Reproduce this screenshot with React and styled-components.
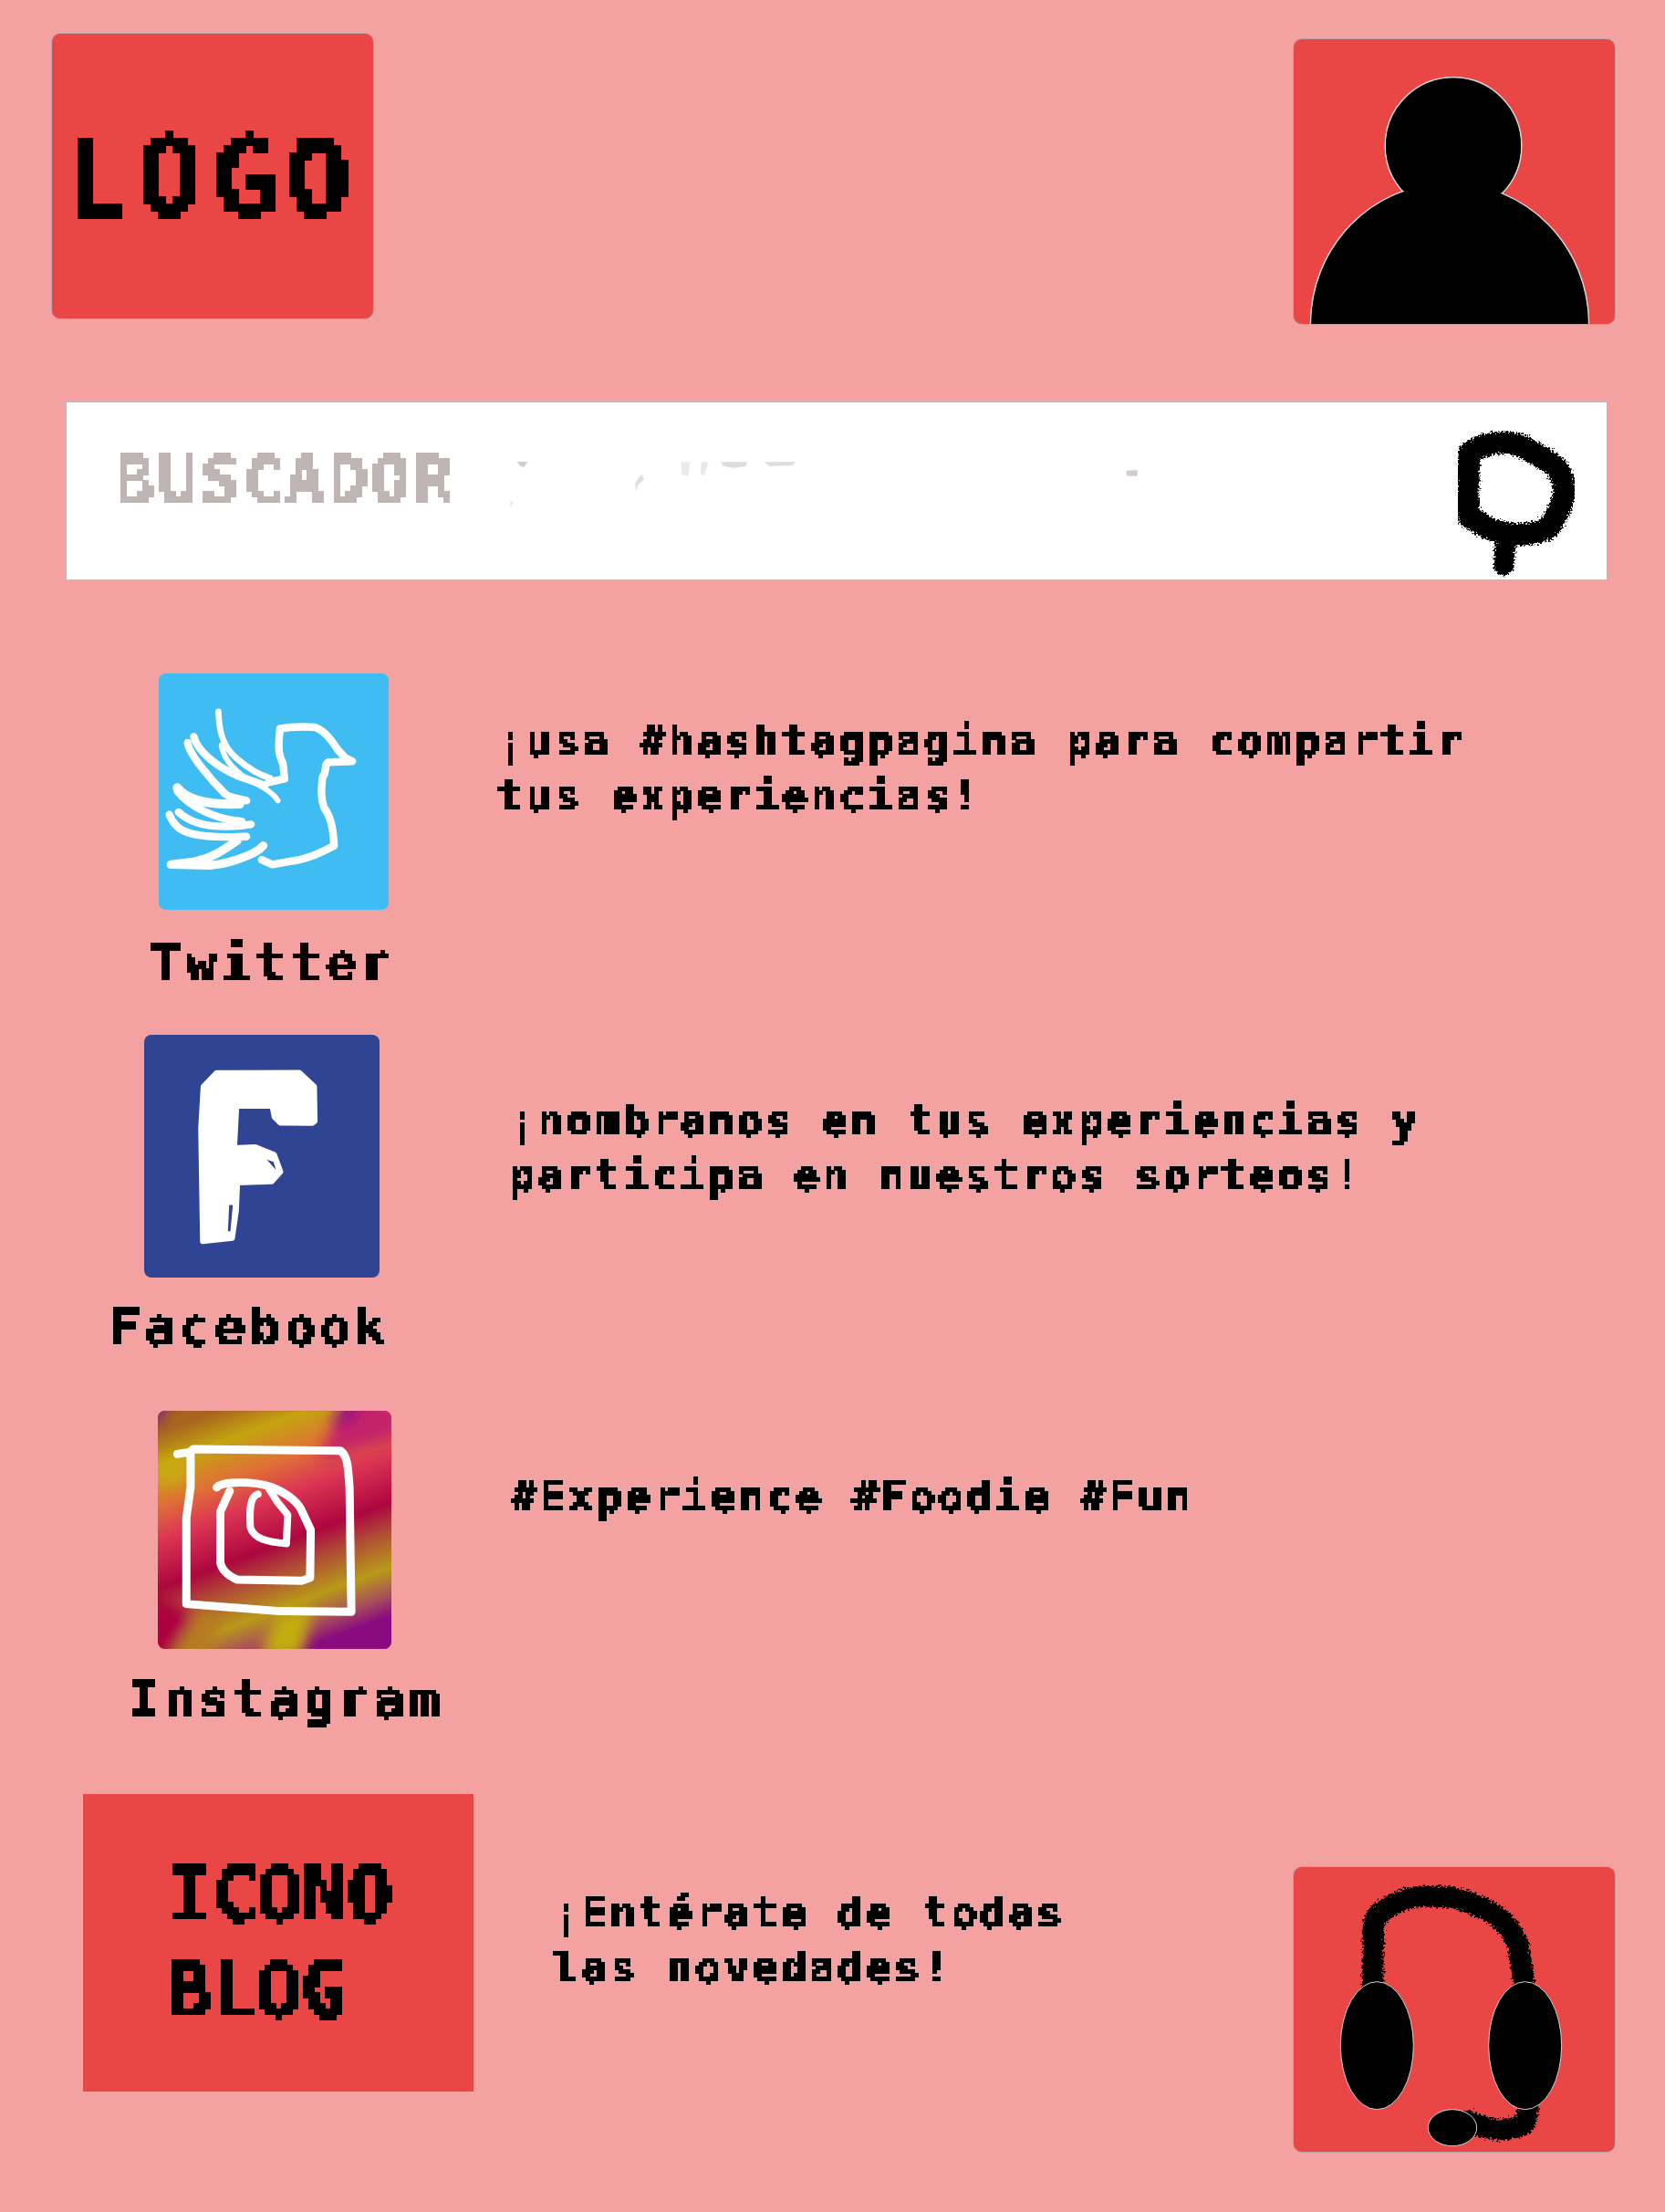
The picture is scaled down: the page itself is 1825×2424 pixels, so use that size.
import React from 'react';
import styled, { createGlobalStyle } from 'styled-components';

const GlobalStyle = createGlobalStyle`
  html, body {
    margin: 0;
    padding: 0;
    background: #f3a1a1;
  }
`;

const MONO = `"DejaVu Sans Mono", "Liberation Mono", monospace`;

const Page = styled.div`
  width: 1825px;
  height: 2424px;
  overflow: hidden;
  background: #f3a1a1;
  font-family: ${MONO};
  font-weight: 700;
  color: #000;
  padding-top: 36px;
  box-sizing: border-box;
`;

const HiddenDefs = styled.svg`
  position: absolute;
  width: 0;
  height: 0;
`;

const Header = styled.header`
  display: flex;
  justify-content: space-between;
  align-items: flex-start;
  padding: 0 54px 0 56px;
`;

const RedTile = styled.div`
  width: 354px;
  height: 314px;
  margin-top: ${({ $top }) => $top || 0}px;
  box-sizing: border-box;
  background: #ea4646;
  border: 1px solid #b9a6a6;
  border-radius: 10px;
  overflow: hidden;
  display: flex;
  align-items: center;
  justify-content: center;
`;

const LogoText = styled.div`
  font-size: 120px;
  letter-spacing: 9px;
  line-height: 1;
  margin-top: 3px;
  margin-left: -3px;
  filter: url(#pxLarge);
`;

const TileArt = styled.svg`
  display: block;
  width: 100%;
  height: 100%;
`;

const SearchBar = styled.div`
  margin: 84px 0 0 72px;
  width: 1690px;
  height: 196px;
  box-sizing: border-box;
  background: #fff;
  border: 1px solid #b9b9b9;
  display: flex;
  align-items: center;
  padding-left: 53px;
`;

const SearchHint = styled.span`
  font-size: 72px;
  letter-spacing: 3.4px;
  line-height: 1;
  color: #bfb5b5;
  margin-top: -24px;
  filter: url(#pxMedium);
`;

const Smudges = styled.svg`
  width: 760px;
  height: 90px;
  margin: -25px 0 0 33px;
  flex: none;
`;

const SearchIcon = styled.svg`
  width: 140px;
  height: 167px;
  margin-left: auto;
  margin-right: 28px;
  margin-top: 28px;
  flex: none;
`;

const SocialList = styled.section`
  margin-top: 102px;
  display: flex;
  flex-direction: column;
`;

const SocialRow = styled.div`
  display: flex;
  align-items: flex-start;
  height: ${({ $height }) => $height}px;
`;

const SocialCard = styled.div`
  width: 540px;
  flex: none;
`;

const SocialIcon = styled.div`
  width: ${({ $w }) => $w}px;
  height: ${({ $h }) => $h}px;
  margin-left: ${({ $left }) => $left}px;
  border-radius: 8px;
  overflow: hidden;
  background: ${({ $bg }) => $bg};
`;

const SocialName = styled.div`
  font-size: 56px;
  letter-spacing: 4.7px;
  line-height: 60px;
  margin-left: ${({ $left }) => $left}px;
  margin-top: ${({ $top }) => $top}px;
  white-space: nowrap;
  filter: url(#pxSmall);
`;

const Copy = styled.p`
  margin: ${({ $top }) => $top}px 0 0 ${({ $left }) => $left}px;
  font-size: 47px;
  letter-spacing: 2.9px;
  line-height: 60px;
  white-space: pre-line;
  filter: url(#pxSmall);
`;

const BlogRow = styled.footer`
  padding-left: 91px;
  display: flex;
  align-items: flex-start;
`;

const BlogTile = styled.div`
  width: 428px;
  height: 326px;
  flex: none;
  background: #ea4646;
  box-sizing: border-box;
  padding: 58px 0 0 91px;
  font-size: 84px;
  line-height: 105px;
  letter-spacing: -1.3px;
`;

const BlogWord = styled.span`
  display: block;
  margin-left: ${({ $left }) => $left || 0}px;
  filter: url(#pxMedium);
`;

const HeadsetTile = styled(RedTile)`
  margin-left: auto;
  margin-right: 54px;
`;

// text stays real text, this only snaps it to a coarse grid like the bitmap font in the mockup
function PixelFilter({ id, size }) {
  const half = Math.floor(size / 2);
  return (
    <filter id={id}>
      <feFlood x={half} y={half} width="1" height="1" />
      <feComposite width={size} height={size} />
      <feTile result="grid" />
      <feComposite in="SourceGraphic" in2="grid" operator="in" />
      <feComponentTransfer>
        <feFuncA type="discrete" tableValues="0 1 1" />
      </feComponentTransfer>
      <feMorphology operator="dilate" radius={half} />
    </filter>
  );
}

function Avatar() {
  return (
    <TileArt viewBox="0 0 352 313" aria-hidden="true">
      <g fill="#000" stroke="#d8d8d8" strokeWidth="1.5">
        <circle cx="175" cy="117" r="75" />
        <ellipse cx="171" cy="313" rx="153" ry="155" />
      </g>
      <g fill="#000">
        <circle cx="175" cy="117" r="74" />
        <ellipse cx="171" cy="313" rx="152" ry="154" />
      </g>
    </TileArt>
  );
}

function SearchGlyph() {
  return (
    <SearchIcon viewBox="100 55 420 500" aria-hidden="true">
      <defs>
        <filter id="roughSearch" x="-10%" y="-10%" width="120%" height="120%">
          <feTurbulence type="fractalNoise" baseFrequency="0.16" numOctaves="3" seed="4" />
          <feDisplacementMap in="SourceGraphic" scale="30" xChannelSelector="R" yChannelSelector="G" />
        </filter>
      </defs>
      <g filter="url(#roughSearch)" fill="none" stroke="#050505" strokeLinejoin="round" strokeLinecap="round">
        <path strokeWidth="74" d="M150 140 C190 110 230 103 265 103 C300 103 325 112 345 125 C375 140 400 155 425 172 C450 195 465 225 465 260 C465 295 445 335 415 380 C385 400 345 405 305 405 C270 400 240 395 215 385 C190 370 165 355 150 345 C148 280 148 210 150 140 Z" />
        <path strokeWidth="68" d="M272 405 L266 505" />
      </g>
    </SearchIcon>
  );
}

function SearchSmudges() {
  return (
    <Smudges viewBox="0 0 1568 186" aria-hidden="true">
      <g fill="#c9bfc0" opacity="0.8">
        <path d="M68 52 L92 52 L84 64 L76 62 Z" />
        <path d="M350 80 L356 92 L342 104 L338 120 L336 100 Z" opacity="0.7" />
        <path d="M84 198 L94 198 L94 208 L84 208 Z" />
        <path d="M530 52 L590 52 L586 62 L560 66 L536 62 Z" opacity="0.7" />
        <path d="M628 52 L700 52 L692 60 L640 62 Z" opacity="0.7" />
        <path d="M1448 72 L1474 70 L1474 84 L1450 84 Z" />
        <path d="M1436 204 L1474 186 L1474 208 L1450 208 Z" />
      </g>
      <g fill="#ece8e8">
        <path d="M440 52 L460 52 L456 84 L442 80 Z" />
        <path d="M486 52 L502 52 L492 84 L484 78 Z" />
        <path d="M480 195 L780 195 L780 208 L480 208 Z" opacity="0.6" />
        <path d="M1310 198 L1436 198 L1436 208 L1310 208 Z" opacity="0.6" />
        <path d="M52 140 L60 142 L54 156 Z" />
      </g>
    </Smudges>
  );
}

function TwitterArt() {
  return (
    <TileArt viewBox="72 55 755 775" aria-hidden="true">
      <g fill="none" stroke="#fff" strokeWidth="25" strokeLinecap="round" strokeLinejoin="round">
        <path d="M470 236 C510 228 550 229 585 231 C620 245 640 275 660 305 L685 332 L708 343 L630 346 C612 352 628 372 610 395 C605 430 605 470 615 495 C640 530 645 570 648 620 C600 645 560 665 500 672 L445 682 L410 666" />
        <path d="M470 236 C465 290 463 320 480 350 L485 400 L432 412" />
        <path d="M268 180 C270 230 275 290 330 335 C370 370 410 390 438 398" strokeWidth="20" />
        <path d="M278 290 C285 340 330 385 380 410 C420 430 450 448 463 472" strokeWidth="18" />
        <path d="M187 262 C200 310 260 360 330 390 L420 422" />
        <path d="M167 282 C172 320 240 400 290 450 C310 465 335 465 360 472" />
        <path d="M133 430 C160 465 220 487 338 483" strokeWidth="30" />
        <path d="M133 440 C170 490 260 535 345 540" />
        <path d="M137 510 C180 550 260 567 375 550" />
        <path d="M107 518 C130 575 170 597 360 590" />
        <path d="M330 603 C290 630 250 660 190 672 L112 682 L240 685 C300 680 390 650 415 620" strokeWidth="28" />
      </g>
    </TileArt>
  );
}

function FacebookArt() {
  return (
    <TileArt viewBox="144 42 775 798" aria-hidden="true">
      <path fill="#fff" stroke="#fff" strokeWidth="18" strokeLinejoin="round" d="M382 167 L655 166 L704 212 L706 326 L698 332 L592 331 L573 312 L566 276 L448 276 L441 414 L510 411 L572 436 L593 492 L564 524 L451 528 L447 620 L434 711 L337 721 L331 350 L339 212 Z" />
      <path fill="#304494" d="M424 602 L436 602 L428 688 L420 688 Z" />
      <path fill="#304494" d="M548 452 L570 460 L578 486 L562 468 Z" />
    </TileArt>
  );
}

function InstagramArt() {
  return (
    <TileArt viewBox="128 48 770 784" aria-hidden="true">
      <defs>
        <linearGradient id="instaBands" gradientUnits="userSpaceOnUse" x1="320" y1="50" x2="610" y2="830">
          <stop offset="0" stopColor="#a8651f" />
          <stop offset="0.12" stopColor="#c4a40f" />
          <stop offset="0.27" stopColor="#df7036" />
          <stop offset="0.4" stopColor="#dc3554" />
          <stop offset="0.58" stopColor="#ad0640" />
          <stop offset="0.68" stopColor="#b04a36" />
          <stop offset="0.82" stopColor="#b89a18" />
          <stop offset="0.92" stopColor="#a84f5a" />
          <stop offset="1" stopColor="#8a0a80" />
        </linearGradient>
        <filter id="instaBlur" x="-30%" y="-30%" width="160%" height="160%">
          <feGaussianBlur stdDeviation="22" />
        </filter>
      </defs>
      <rect x="128" y="48" width="770" height="784" fill="url(#instaBands)" />
      <g filter="url(#instaBlur)">
        <path d="M740 10 L930 10 L930 130 L660 210 Z" fill="#c4206a" />
        <path d="M740 20 L800 20 L760 90 L700 90 Z" fill="#8b0f80" />
        <path d="M90 640 L250 720 L160 880 L90 880 Z" fill="#ad0640" />
        <path d="M170 860 L260 720 L340 720 L300 860 Z" fill="#b77a20" />
        <path d="M460 860 L520 720 L640 690 L600 860 Z" fill="#c2ad10" />
        <path d="M90 10 L170 10 L130 90 L90 90 Z" fill="#7d1f8a" />
        <path d="M120 220 L230 190 L230 290 L120 300 Z" fill="#c9b00a" opacity="0.7" />
      </g>
      <g fill="none" stroke="#fff" strokeWidth="27" strokeLinecap="round" strokeLinejoin="round">
        <path d="M192 190 L232 184 L245 174 L730 179 C752 195 755 225 760 300 L766 710 L530 708 L222 684 L222 400 L236 300 L236 185" />
        <path d="M322 300 C340 280 440 278 500 298 C550 318 585 345 600 372 L632 440 L630 598 L602 608 L390 604 C360 592 336 570 334 545 L334 380 L365 312" />
        <path d="M458 322 C430 330 430 380 433 432 C445 470 490 480 552 485 L556 390 L520 345 L495 305" strokeWidth="24" />
      </g>
    </TileArt>
  );
}

function HeadsetArt() {
  return (
    <TileArt viewBox="54 44 1056 936" aria-hidden="true">
      <defs>
        <filter id="roughBand" x="-10%" y="-10%" width="120%" height="120%">
          <feTurbulence type="fractalNoise" baseFrequency="0.14" numOctaves="3" seed="9" />
          <feDisplacementMap in="SourceGraphic" scale="28" xChannelSelector="R" yChannelSelector="G" />
        </filter>
      </defs>
      <g filter="url(#roughBand)" fill="none" stroke="#050505" strokeLinecap="round" strokeLinejoin="round">
        <path strokeWidth="70" d="M314 440 L316 245 C320 185 370 175 430 146 C500 135 590 135 650 170 C720 190 770 240 792 300 L812 430" />
        <path strokeWidth="70" d="M825 840 L815 885 C770 915 700 915 630 880" />
      </g>
      <g fill="#000" stroke="#d2d2d2" strokeWidth="3">
        <ellipse cx="328" cy="631" rx="120" ry="210" />
        <ellipse cx="815" cy="631" rx="120" ry="210" />
        <ellipse cx="576" cy="901" rx="80" ry="60" />
      </g>
    </TileArt>
  );
}

const socials = [
  {
    name: 'Twitter',
    height: 396,
    icon: { w: 252, h: 259, left: 174, bg: '#3fbcf2', art: <TwitterArt /> },
    nameLeft: 165,
    nameTop: 28,
    textTop: 44,
    textLeft: 5,
    text: '¡usa #hashtagpagina para compartir\ntus experiencias!',
  },
  {
    name: 'Facebook',
    height: 412,
    icon: { w: 258, h: 266, left: 158, bg: '#304494', art: <FacebookArt /> },
    nameLeft: 120,
    nameTop: 24,
    textTop: 64,
    textLeft: 18,
    text: '¡nombranos en tus experiencias y\nparticipa en nuestros sorteos!',
  },
  {
    name: 'Instagram',
    height: 420,
    icon: { w: 256, h: 261, left: 173, bg: '#c2304f', art: <InstagramArt /> },
    nameLeft: 141,
    nameTop: 25,
    textTop: 64,
    textLeft: 20,
    text: '#Experience #Foodie #Fun',
  },
];

export default function App() {
  return (
    <Page>
      <GlobalStyle />
      <HiddenDefs aria-hidden="true">
        <PixelFilter id="pxSmall" size={4} />
        <PixelFilter id="pxMedium" size={6} />
        <PixelFilter id="pxLarge" size={8} />
      </HiddenDefs>

      <Header>
        <RedTile>
          <LogoText>LOGO</LogoText>
        </RedTile>
        <RedTile $top={6}>
          <Avatar />
        </RedTile>
      </Header>

      <SearchBar>
        <SearchHint>BUSCADOR</SearchHint>
        <SearchSmudges />
        <SearchGlyph />
      </SearchBar>

      <SocialList>
        {socials.map((s) => (
          <SocialRow key={s.name} $height={s.height}>
            <SocialCard>
              <SocialIcon $w={s.icon.w} $h={s.icon.h} $left={s.icon.left} $bg={s.icon.bg}>
                {s.icon.art}
              </SocialIcon>
              <SocialName $left={s.nameLeft} $top={s.nameTop}>{s.name}</SocialName>
            </SocialCard>
            <Copy $top={s.textTop} $left={s.textLeft}>{s.text}</Copy>
          </SocialRow>
        ))}
      </SocialList>

      <BlogRow>
        <BlogTile>
          <BlogWord $left={1}>ICONO</BlogWord>
          <BlogWord>BLOG</BlogWord>
        </BlogTile>
        <Copy $top={100} $left={87}>{'¡Entérate de todas\nlas novedades!'}</Copy>
        <HeadsetTile $top={79}>
          <HeadsetArt />
        </HeadsetTile>
      </BlogRow>
    </Page>
  );
}
